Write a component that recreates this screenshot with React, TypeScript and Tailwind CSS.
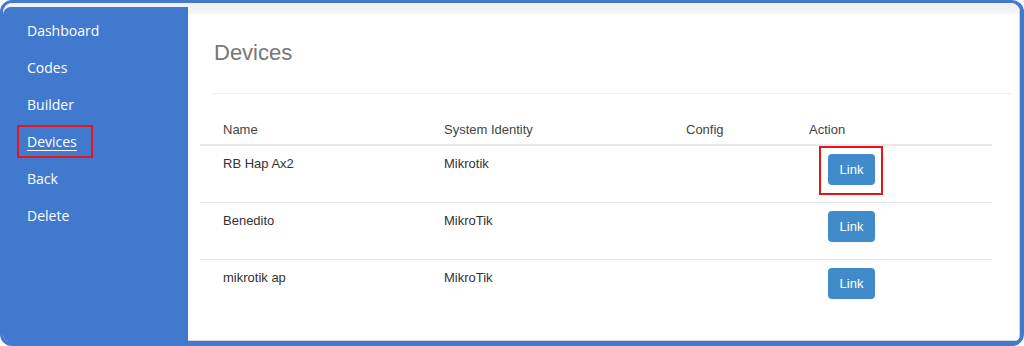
import React from 'react';

const navItems = ['Dashboard', 'Codes', 'Builder', 'Devices', 'Back', 'Delete'];

const devices = [
  { name: 'RB Hap Ax2', identity: 'Mikrotik', config: '' },
  { name: 'Benedito', identity: 'MikroTik', config: '' },
  { name: 'mikrotik ap', identity: 'MikroTik', config: '' },
];

const App: React.FC = () => {
  return (
    <div className="w-[1024px] h-[346px] bg-[#4179cf] rounded-[12px] pt-[3px] pr-[4px] pb-[5px] pl-[3px] overflow-hidden">
      <div className="h-full flex flex-col bg-[#f1f1f1] rounded-t-[9px] rounded-b-[6px] overflow-hidden">
        <div className="h-[4px] shrink-0 bg-[#f1f1f1]" />
        <div className="flex flex-1 min-h-0">
          {/* Sidebar */}
          <nav
            className="w-[185px] shrink-0 bg-[#4179cf] rounded-tl-[8px] pt-[5px] pl-[24px] flex flex-col"
            style={{ fontFamily: '"Open Sans", sans-serif' }}
          >
            {navItems.map(item => {
              const active = item === 'Devices';
              return (
                <div key={item} className="h-[37px] flex items-center">
                  {active ? (
                    <span className="-ml-[10px] border-2 border-[#e8141c] px-[8px] h-[33px] w-[76px] flex items-center">
                      <a className="text-white text-[14px] underline underline-offset-[3px] decoration-[1px]">{item}</a>
                    </span>
                  ) : (
                    <a className="text-white text-[14px]">{item}</a>
                  )}
                </div>
              );
            })}
          </nav>

          {/* Main content */}
          <main
            className="flex-1 flex flex-col border-r border-b border-[#d4d4d4]"
            style={{ fontFamily: '"Liberation Sans", Arial, sans-serif' }}
          >
            <div className="h-[7px] shrink-0 bg-gradient-to-b from-[#f1f1f1] to-[#f7f7f7]" />
            <div className="flex-1 bg-white pl-[12px] pr-[7px]">
              <div className="ml-[13px] border-b border-[#eeeeee] h-[80px] flex items-center">
                <h1 className="text-[22px] text-[#777777] pl-[1px] pb-[2px]">Devices</h1>
              </div>

              <div className="w-[792px] text-[13px] text-[#333333]">
                <div className="h-[52px] flex items-end pb-[5px] border-b-2 border-[#e9e9e9] text-[#444444]">
                  <div className="w-[244px] pl-[23px]">Name</div>
                  <div className="w-[242px]">System Identity</div>
                  <div className="w-[123px]">Config</div>
                  <div className="flex-1">Action</div>
                </div>
                {devices.map((d, i) => (
                  <div
                    key={d.name}
                    className={`h-[57px] flex items-start pt-[8px] ${i < devices.length - 1 ? 'border-b border-[#e6e6e6]' : ''}`}
                  >
                    <div className="w-[244px] pl-[23px] pt-[1px] leading-[18px]">{d.name}</div>
                    <div className="w-[242px] pt-[1px] leading-[18px]">{d.identity}</div>
                    <div className="w-[123px] pt-[1px] leading-[18px]">{d.config}</div>
                    <div className="flex-1 pl-[19px]">
                      {i === 0 ? (
                        <div className="-ml-[9px] -mt-[8px] w-[64px] h-[49px] border-2 border-[#e8141c] pl-[7px] pt-[6px]">
                          <button className="w-[47px] h-[31px] rounded-[4px] bg-[#428bca] text-white text-[13px]">Link</button>
                        </div>
                      ) : (
                        <button className="w-[47px] h-[31px] rounded-[4px] bg-[#428bca] text-white text-[13px]">Link</button>
                      )}
                    </div>
                  </div>
                ))}
              </div>
            </div>
          </main>
        </div>
      </div>
    </div>
  );
};

export default App;
